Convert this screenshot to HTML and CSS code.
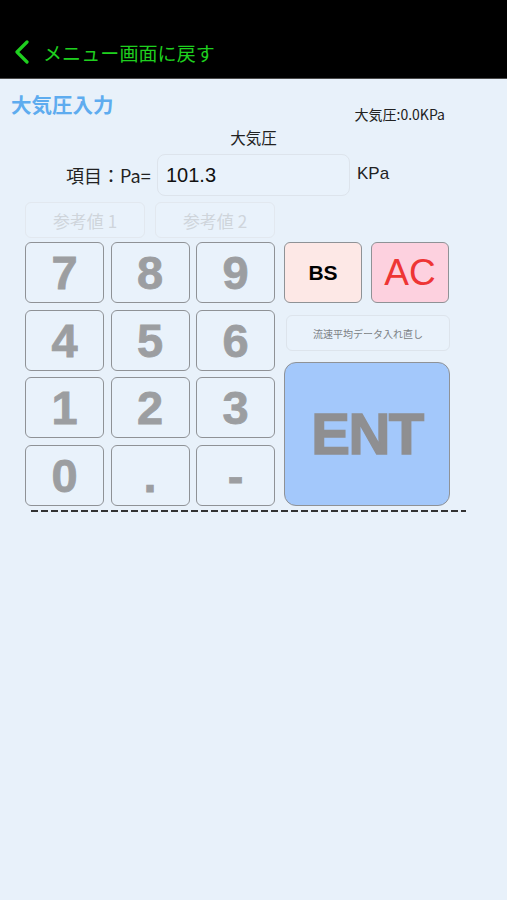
FILE: index.html
```html
<!DOCTYPE html>
<html lang="ja">
<head>
<meta charset="utf-8">
<title>大気圧入力</title>
<link rel="stylesheet" href="styles.css">
</head>
<body>
<header class="nav">
  <svg class="chev" width="16" height="24" viewBox="0 0 16 24"><path d="M13 2 L3 12 L13 22" fill="none" stroke="#1fd01f" stroke-width="3.2" stroke-linecap="round" stroke-linejoin="round"/></svg>
  <span class="back">メニュー画面に戻す</span>
</header>
<main class="content">
  <div class="toprow">
    <h1 class="title">大気圧入力</h1>
    <span class="status">大気圧:0.0KPa</span>
  </div>
  <div class="item-name">大気圧</div>
  <div class="inputrow">
    <span class="label">項目：Pa=</span>
    <div class="field">101.3</div>
    <span class="unit">KPa</span>
  </div>
  <div class="refrow">
    <button class="ref">参考値 1</button>
    <button class="ref">参考値 2</button>
  </div>
  <div class="pad">
    <div class="keys">
      <button class="key">7</button><button class="key">8</button><button class="key">9</button>
      <button class="key">4</button><button class="key">5</button><button class="key">6</button>
      <button class="key">1</button><button class="key">2</button><button class="key">3</button>
      <button class="key">0</button><button class="key">.</button><button class="key">-</button>
    </div>
    <div class="side">
      <div class="siderow">
        <button class="bs">BS</button>
        <button class="ac">AC</button>
      </div>
      <button class="redo">流速平均データ入れ直し</button>
      <button class="ent">ENT</button>
    </div>
  </div>
  <div class="dash"></div>
</main>
</body>
</html>
```
FILE: styles.css
```css
* { box-sizing: border-box; }
html, body { margin: 0; padding: 0; }
body {
  width: 507px;
  height: 900px;
  background: #e8f1fa;
  font-family: "Noto Sans CJK JP", "Noto Sans", sans-serif;
  color: #222;
}
button {
  font-family: inherit;
  padding: 0;
  margin: 0;
  cursor: pointer;
}
.nav {
  height: 79px;
  background: #000;
  border-bottom: 1px solid #4a4a4a;
  display: flex;
  align-items: center;
  padding: 26px 0 0 14px;
}
.chev { display: block; margin-right: 13px; }
.back {
  color: #1fd01f;
  font-size: 19px;
  letter-spacing: 0.1px;
}
.toprow {
  display: flex;
  justify-content: space-between;
  align-items: flex-start;
  padding: 11px 62px 0 11px;
  height: 44px;
}
.title {
  margin: 0;
  font-size: 20.5px;
  font-weight: 700;
  color: #5eacef;
  line-height: 28px;
}
.status {
  font-size: 14px;
  margin-top: 16px;
  line-height: 16px;
}
.item-name {
  font-size: 15.5px;
  text-align: center;
  width: 507px;
  line-height: 20px;
  margin-top: 4px;
}
.inputrow {
  display: flex;
  align-items: center;
  margin-top: 7px;
  padding-left: 66px;
  height: 42px;
}
.label {
  font-size: 18px;
  width: 91px;
}
.field {
  width: 193px;
  height: 42px;
  border: 1px solid #dde4ec;
  border-radius: 8px;
  background: #e9f2fb;
  font-family: "Liberation Sans", Arial, sans-serif;
  font-size: 20px;
  line-height: 40px;
  padding-left: 8px;
  color: #111;
}
.unit {
  margin-left: 7px;
  font-family: "Liberation Sans", Arial, sans-serif;
  font-size: 17px;
  margin-top: -2px;
}
.refrow {
  display: flex;
  gap: 10px;
  padding-left: 25px;
  margin-top: 6px;
}
.ref {
  width: 120px;
  height: 36px;
  border: 1px solid #e2e8ef;
  border-radius: 6px;
  background: #e9f2fb;
  color: #cfd5db;
  font-size: 17px;
}
.pad {
  display: flex;
  padding-left: 25px;
  margin-top: 4px;
}
.keys {
  display: grid;
  grid-template-columns: 79px 79px 79px;
  grid-auto-rows: 61px;
  column-gap: 6.5px;
  row-gap: 6.5px;
}
.key {
  border: 1.5px solid #8f9296;
  border-radius: 6px;
  background: #e9f2fb;
  color: #9c9ea1;
  font-family: "Liberation Sans", Arial, sans-serif;
  font-weight: 700;
  font-size: 47px;
  -webkit-text-stroke: 0.8px #9c9ea1;
  line-height: 1;
}
.side {
  width: 166px;
  margin-left: 9px;
  display: flex;
  flex-direction: column;
}
.siderow {
  display: flex;
  gap: 9px;
}
.bs, .ac {
  width: 78px;
  height: 61px;
  border: 1.5px solid #8f9296;
  border-radius: 6px;
}
.bs {
  background: #fde8e6;
  color: #000;
  font-family: "Liberation Sans", Arial, sans-serif;
  font-weight: 700;
  font-size: 21px;
}
.ac {
  background: #fdd1df;
  color: #ee3535;
  font-family: "Liberation Sans", Arial, sans-serif;
  font-size: 37px;
}
.redo {
  margin: 12px 0 0 2px;
  width: 164px;
  height: 36px;
  border: 1px solid #dde4ec;
  border-radius: 6px;
  background: #e9f2fb;
  color: #7b7f84;
  font-size: 10px;
}
.ent {
  margin-top: 11px;
  flex: 1;
  border: 1.5px solid #8f9296;
  border-radius: 12px;
  background: #a3c8fb;
  color: #8f8f91;
  font-family: "Liberation Sans", Arial, sans-serif;
  font-weight: 700;
  font-size: 58px;
  letter-spacing: -1.5px;
  -webkit-text-stroke: 1.5px #8f8f91;
}
.dash {
  margin: 4px 0 0 31px;
  width: 435px;
  height: 2px;
  background: repeating-linear-gradient(to right, #333 0 7px, transparent 7px 10px);
}
```
